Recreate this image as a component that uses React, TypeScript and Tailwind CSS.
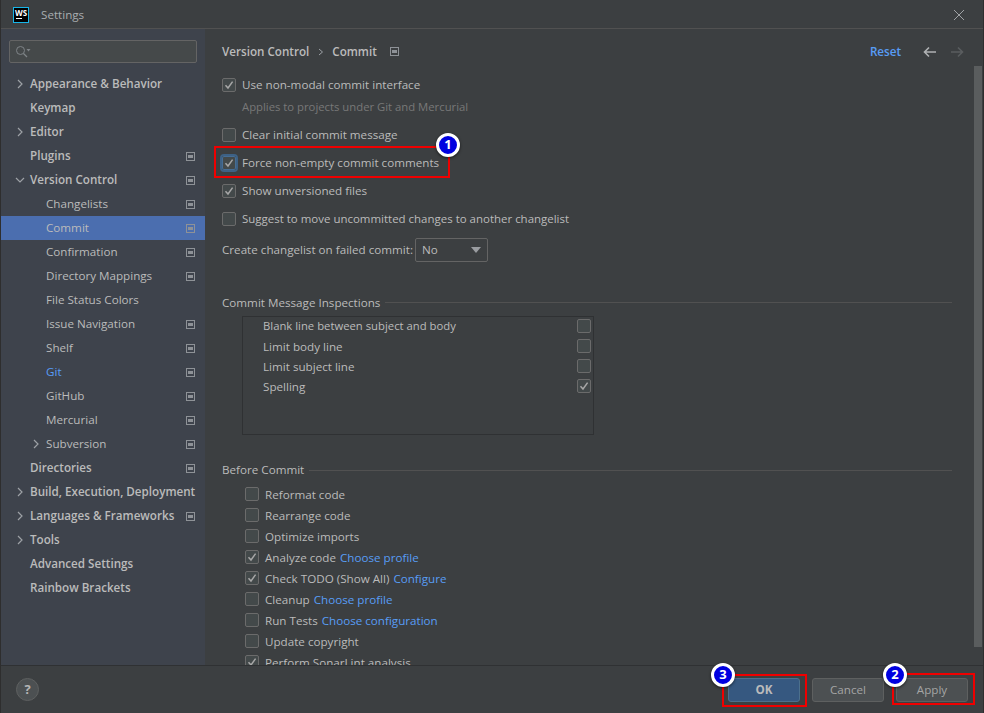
const navItems = [
  { label: "Appearance & Behavior", bold: true, arrow: "right", indent: 0 },
  { label: "Keymap", bold: true, indent: 0 },
  { label: "Editor", bold: true, arrow: "right", indent: 0 },
  { label: "Plugins", bold: true, icon: true, indent: 0 },
  { label: "Version Control", bold: true, arrow: "down", icon: true, indent: 0 },
  { label: "Changelists", icon: true, indent: 1 },
  { label: "Commit", icon: true, indent: 1, selected: true },
  { label: "Confirmation", icon: true, indent: 1 },
  { label: "Directory Mappings", icon: true, indent: 1 },
  { label: "File Status Colors", indent: 1 },
  { label: "Issue Navigation", icon: true, indent: 1 },
  { label: "Shelf", icon: true, indent: 1 },
  { label: "Git", icon: true, indent: 1, link: true },
  { label: "GitHub", icon: true, indent: 1 },
  { label: "Mercurial", icon: true, indent: 1 },
  { label: "Subversion", icon: true, indent: 1, arrow: "right" },
  { label: "Directories", bold: true, icon: true, indent: 0 },
  { label: "Build, Execution, Deployment", bold: true, arrow: "right", indent: 0 },
  { label: "Languages & Frameworks", bold: true, arrow: "right", icon: true, indent: 0 },
  { label: "Tools", bold: true, arrow: "right", indent: 0 },
  { label: "Advanced Settings", bold: true, indent: 0 },
  { label: "Rainbow Brackets", bold: true, indent: 0 },
];

const beforeCommit = [
  { label: "Reformat code" },
  { label: "Rearrange code" },
  { label: "Optimize imports" },
  { label: "Analyze code", checked: true, link: "Choose profile" },
  { label: "Check TODO (Show All)", checked: true, link: "Configure" },
  { label: "Cleanup", link: "Choose profile" },
  { label: "Run Tests", link: "Choose configuration" },
  { label: "Update copyright" },
  { label: "Perform SonarLint analysis", checked: true },
];

function Checkbox({ checked, focused }: { checked?: boolean; focused?: boolean }) {
  return (
    <span
      className={
        "flex w-[14px] h-[14px] shrink-0 items-center justify-center rounded-[2px] border " +
        (focused ? "border-[#466d94] bg-[#43494a] outline-2 outline-[#3d6185]" : "border-[#6b6b6b] bg-[#43494a]")
      }
    >
      {checked && (
        <svg width="10" height="10" viewBox="0 0 10 10" fill="none">
          <path d="M1.5 5.2 4 8 8.600 1.600" stroke="#a7a7a7" strokeWidth="1.5" />
        </svg>
      )}
    </span>
  );
}

function PageIcon({ className }: { className?: string }) {
  return (
    <svg width="9" height="9" viewBox="0 0 9 9" className={className}>
      <rect x="0.5" y="0.5" width="8" height="8" fill="none" stroke="#8e9297" />
      <rect x="2" y="3" width="5" height="3" fill="#8e9297" />
    </svg>
  );
}

function Arrow({ dir }: { dir: string }) {
  return (
    <svg width="10" height="10" viewBox="0 0 10 10" fill="none">
      <path d={dir === "down" ? "M1 3 5 7 9 3" : "M3 1 7 5 3 9"} stroke="#9da1a6" strokeWidth="1.2" />
    </svg>
  );
}

function Badge({ n, className }: { n: number; className: string }) {
  return (
    <span
      className={
        "absolute flex w-[24px] h-[24px] items-center justify-center rounded-full border-[3px] border-white bg-[#0000e0] text-[13px] font-bold text-white shadow-[0_1px_3px_rgba(0,0,0,0.6)] " +
        className
      }
    >
      {n}
    </span>
  );
}

function Sidebar() {
  return (
    <aside className="w-[204px] shrink-0 bg-[#3e434c] overflow-hidden">
      <div className="mx-2 mt-[11px] mb-[9px] flex h-[23px] items-center rounded-[2px] border border-[#646464] bg-[#45494a] pl-[5px]">
        <svg width="16" height="14" viewBox="0 0 16 14" fill="none">
          <circle cx="5.5" cy="5.5" r="4" stroke="#7f8488" strokeWidth="1" />
          <path d="M8.500 8.500 12 12" stroke="#7f8488" strokeWidth="1.2" />
          <path d="M11.500 4h4L13.500 6.500z" fill="#7f8488" />
        </svg>
      </div>
      {navItems.map((item) => (
        <div
          key={item.label}
          className={"flex h-[24px] items-center pr-[10px] " + (item.selected ? "bg-[#4b6eaf]" : "")}
        >
          <span className={"flex w-[29px] shrink-0 justify-end " + (item.indent ? "ml-[16px]" : "")}>
            <span className="mr-[5px] flex w-[10px]">{item.arrow && <Arrow dir={item.arrow} />}</span>
          </span>
          <span
            className={
              "min-w-0 flex-1 whitespace-nowrap " +
              (item.bold ? "font-semibold " : "") +
              (item.link ? "text-[#589df6]" : "text-[#bbbbbb]")
            }
          >
            {item.label}
          </span>
          {item.icon && <PageIcon className="shrink-0" />}
        </div>
      ))}
    </aside>
  );
}

function Row({ checked, focused, children, className }: { checked?: boolean; focused?: boolean; children: React.ReactNode; className?: string }) {
  return (
    <div className={"flex items-center gap-[6px] " + (className || "")}>
      <Checkbox checked={checked} focused={focused} />
      <span className="whitespace-nowrap">{children}</span>
    </div>
  );
}

function SectionTitle({ children }: { children: React.ReactNode }) {
  return (
    <div className="flex items-center gap-[5px]">
      <span className="whitespace-nowrap">{children}</span>
      <span className="h-px flex-1 bg-[#515151]" />
    </div>
  );
}

function Content() {
  return (
    <main className="relative flex min-w-0 flex-1 flex-col">
      <div className="flex h-[37px] shrink-0 items-center pl-[17px] pr-[19px] pt-[8px]">
        <span className="font-semibold">Version Control</span>
        <svg width="8" height="8" viewBox="0 0 8 8" fill="none" className="mx-[7.5px]">
          <path d="M2 1 5.500 4 2 7" stroke="#9da1a6" />
        </svg>
        <span className="font-semibold">Commit</span>
        <PageIcon className="ml-[13px]" />
        <span className="ml-auto font-semibold text-[#589df6]">Reset</span>
        <svg width="14" height="12" viewBox="0 0 14 12" fill="none" className="ml-[22px]">
          <path d="M13 6H2M6 1.500 1.500 6 6 10.500" stroke="#afb1b3" strokeWidth="1.6" />
        </svg>
        <svg width="14" height="12" viewBox="0 0 14 12" fill="none" className="ml-[13px]">
          <path d="M1 6h11M8 1.500 12.500 6 8 10.500" stroke="#5a5d5f" strokeWidth="1.6" />
        </svg>
      </div>

      <div className="flex-1 overflow-hidden pl-[17px] pr-[31px] pt-[7px]">
        <Row checked className="h-[24px]">Use non-modal commit interface</Row>
        <div className="ml-[20px] h-[19px] text-[11.3px] leading-[19px] text-[#787878]">Applies to projects under Git and Mercurial</div>
        <Row className="mt-[7px] h-[24px]">Clear initial commit message</Row>
        <Row checked focused className="mt-[4px] h-[24px]">Force non-empty commit comments</Row>
        <Row checked className="mt-[4px] h-[24px]">Show unversioned files</Row>
        <Row className="mt-[4px] h-[24px] text-[11.47px]">Suggest to move uncommitted changes to another changelist</Row>
        <div className="mt-[7px] flex h-[24px] items-center gap-[2px]">
          <span>Create changelist on failed commit:</span>
          <span className="flex h-[24px] w-[73px] items-center justify-between rounded-[2px] border border-[#646464] bg-[#3c3f41] pl-[6px] pr-[6px]">
            No
            <svg width="10" height="6" viewBox="0 0 10 6"><path d="M0 0h10L5 6z" fill="#9a9da1" /></svg>
          </span>
        </div>

        <div className="mt-[32px]"><SectionTitle>Commit Message Inspections</SectionTitle></div>
        <div className="ml-[20px] mt-[5px] h-[119px] w-[352px] border border-[#2f3133]">
          <div className="-mt-px">
            {[
              ["Blank line between subject and body", false],
              ["Limit body line", false],
              ["Limit subject line", false],
              ["Spelling", true],
            ].map(([label, on]) => (
              <div key={label as string} className="flex h-[20px] items-center justify-between pl-[20px] pr-[1px]">
                <span className={label === "Blank line between subject and body" ? "text-[11.3px]" : ""}>{label}</span>
                <span className="mr-[1px]"><Checkbox checked={on as boolean} /></span>
              </div>
            ))}
          </div>
        </div>

        <div className="mt-[26px]"><SectionTitle>Before Commit</SectionTitle></div>
        <div className="ml-[23px] mt-[5px]">
          {beforeCommit.map((item) => (
            <Row key={item.label} checked={item.checked} className="h-[21px]">
              {item.label}
              {item.link && <span className="ml-[4px] text-[#589df6]">{item.link}</span>}
            </Row>
          ))}
        </div>
      </div>

      <div className="absolute right-[1px] top-[37px] h-[581px] w-[8px] bg-[#5a5d5e]" />
    </main>
  );
}

export default function App() {
  return (
    <div
      className="relative flex h-[713px] w-[984px] flex-col overflow-hidden border-x border-[#2e2e2e] bg-[#3c3f41] text-[11.65px] text-[#bbbbbb]"
      style={{ fontFamily: '"Open Sans", "Noto Sans", sans-serif' }}
    >
      <header className="flex h-[29px] shrink-0 items-center border-b border-[#515151] pl-[12px] pr-[18px] pt-[1px]">
        <span className="flex h-[16px] w-[16px] flex-col items-center border border-[#18b5e8] bg-black text-[8px] font-bold leading-[9px] text-white">
          WS
          <span className="mt-[1px] ml-[-5px] h-px w-[6px] bg-white" />
        </span>
        <span className="ml-[12px] text-[#a9adb0]">Settings</span>
        <svg width="12" height="12" viewBox="0 0 12 12" className="ml-auto" fill="none">
          <path d="M1 1 11 11M11 1 1 11" stroke="#a0a3a6" />
        </svg>
      </header>

      <div className="flex min-h-0 flex-1">
        <Sidebar />
        <Content />
      </div>

      <footer className="flex h-[48px] shrink-0 items-center border-t border-[#2f3133] bg-[#3c3f41] pl-[15px] pr-[15px]">
        <span className="flex h-[23px] w-[23px] items-center justify-center rounded-full border border-[#5e6060] bg-[#4c5052] text-[13px] font-bold text-[#b5b5b5]">?</span>
        <span className="ml-auto flex h-[24px] w-[72px] items-center justify-center rounded-[3px] border border-[#4c708c] bg-[#365880] font-bold">OK</span>
        <span className="ml-[12px] flex h-[24px] w-[72px] items-center justify-center rounded-[3px] border border-[#5e6060] bg-[#4c5052] text-[#a5a5a5]">Cancel</span>
        <span className="ml-[12px] flex h-[24px] w-[72px] items-center justify-center rounded-[3px] border border-[#5e6060] bg-[#4c5052] text-[#a5a5a5]">Apply</span>
      </footer>

      <div className="absolute left-[213px] top-[146px] h-[32px] w-[236px] border-[2px] border-[#f00000]" />
      <div className="absolute left-[721px] top-[674px] h-[33px] w-[85px] border-[2px] border-[#f00000]" />
      <div className="absolute left-[891px] top-[673px] h-[32px] w-[83px] border-[2px] border-[#f00000]" />
      <Badge n={1} className="left-[435px] top-[133px]" />
      <Badge n={2} className="left-[882px] top-[663px]" />
      <Badge n={3} className="left-[710px] top-[663px]" />
    </div>
  );
}
